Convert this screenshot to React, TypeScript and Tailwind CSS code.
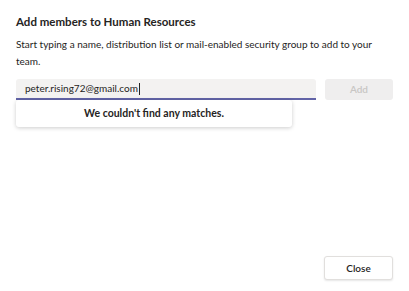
import React from "react";

export default function App() {
  return (
    <div
      className="w-[409px] h-[291px] bg-white flex flex-col px-4 pt-[14px] pb-[11px] text-[#252423]"
      style={{ fontFamily: 'Lato, "Open Sans", sans-serif' }}
    >
      <h1 className="text-[11.5px] font-bold leading-4">
        Add members to Human Resources
      </h1>
      <p className="mt-[6px] text-[10px] leading-[17px] text-[#252423]">
        Start typing a name, distribution list or mail-enabled security group to add to your
        team.
      </p>

      <div className="mt-[9px] flex gap-[9px]">
        <div className="relative w-[300px]">
          <div className="h-[21px] bg-[#f3f2f1] border-b-2 border-[#6264a7] flex items-center pl-[9px] text-[10px] rounded-t-[3px]">
            <span>peter.rising72@gmail.com</span>
            <span className="w-px h-[12px] bg-[#252423] ml-px" />
          </div>
          <div className="absolute left-0 top-[21px] w-[276px] h-[27px] bg-white rounded-[3px] shadow-[0_1px_4px_rgba(0,0,0,0.2)] flex items-center justify-center text-[10.5px] font-bold">
            We couldn't find any matches.
          </div>
        </div>
        <button className="w-[68px] h-[21px] rounded-[3px] bg-[#efeeee] text-[#c8c6c4] text-[10px] font-semibold">
          Add
        </button>
      </div>

      <div className="mt-auto flex justify-end">
        <button className="w-[69px] h-[24px] rounded-[3px] bg-white border border-[#e1dfdd] shadow-[0_1px_2px_rgba(0,0,0,0.1)] text-[10px] font-semibold">
          Close
        </button>
      </div>
    </div>
  );
}
